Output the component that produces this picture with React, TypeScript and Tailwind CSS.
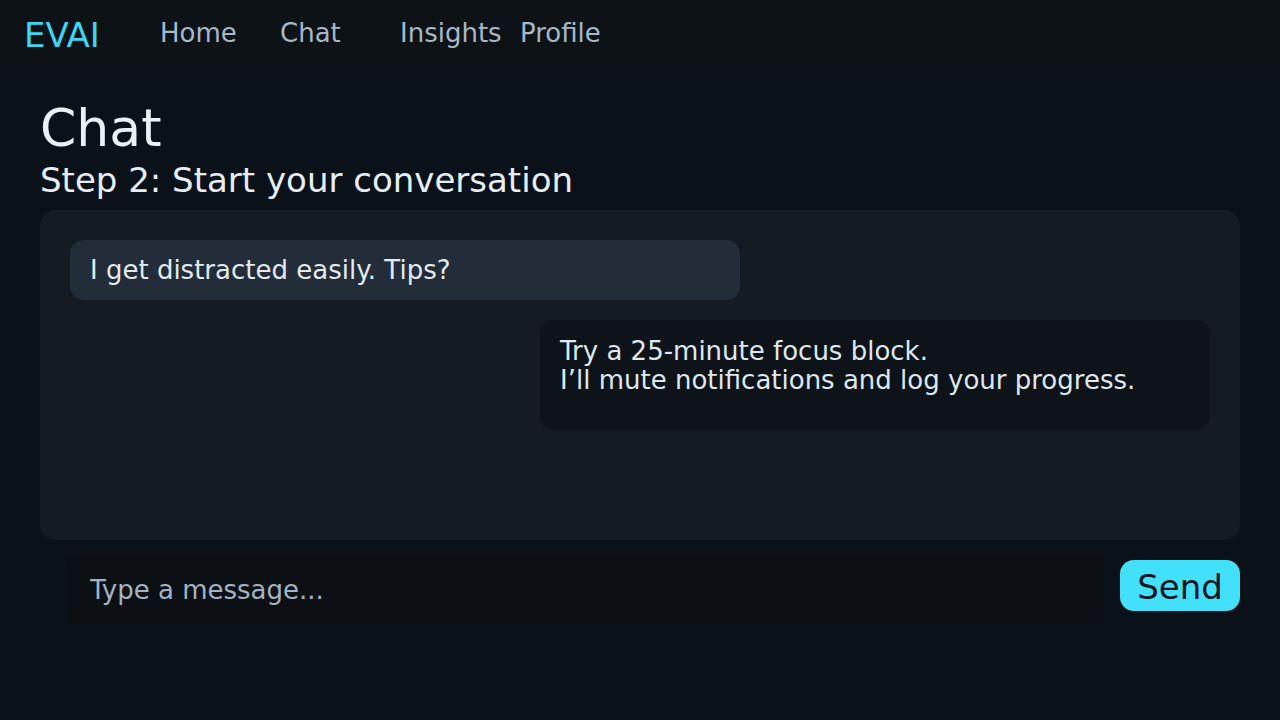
import React from 'react';

const links = ['Home', 'Chat', 'Insights', 'Profile'];

export default function App() {
  return (
    <div
      className="min-h-screen w-full bg-[#0a1119] text-[#e6edf5] flex flex-col"
      style={{ fontFamily: '"DejaVu Sans", Verdana, sans-serif' }}
    >
      {/* header */}
      <header className="h-[65px] bg-[#0d1217] flex items-center pl-6">
        <span className="w-[136px] text-[34px] leading-none text-[#3fd4ef] pt-[4px]">EVAI</span>
        <nav className="flex items-center">
          {links.map((l) => (
            <a key={l} className="w-[120px] text-[26px] leading-none text-[#a6b8c8]">
              {l}
            </a>
          ))}
        </nav>
      </header>

      <main className="flex flex-col px-10 pt-[34px]">
        <h1 className="text-[52px] leading-[58px] text-[#e8f0f8]">Chat</h1>
        <h2 className="text-[34px] leading-[40px] text-[#e6eef7] mt-[3px]">Step 2: Start your conversation</h2>

        {/* conversation */}
        <section className="mt-[10px] h-[330px] rounded-2xl bg-[#151b23] p-[30px] flex flex-col gap-5">
          <div className="w-[670px] rounded-[14px] bg-[#232d39] px-5 py-[14px] text-[26px] leading-[32px] text-[#e2eaf2]">
            I get distracted easily. Tips?
          </div>
          <div className="self-end w-[670px] h-[110px] rounded-[14px] bg-[#0e1319] px-5 pt-[17px] text-[26px] leading-[29px] text-[#dfe7ef]">
            <p>Try a 25-minute focus block.</p>
            <p>I’ll mute notifications and log your progress.</p>
          </div>
        </section>

        {/* composer */}
        <div className="mt-[16px] flex items-start gap-4 pl-[26px]">
          <input
            placeholder="Type a message..."
            className="flex-1 h-[68px] rounded-lg bg-[#0c1015] px-6 text-[26px] text-[#e6edf5] placeholder:text-[#a3b3c2] outline-none"
          />
          <button className="mt-[4px] w-[120px] h-[51px] rounded-[14px] bg-[#43e0fc] text-[34px] leading-none text-[#0b1520] pt-[3px]">
            Send
          </button>
        </div>
      </main>
    </div>
  );
}
